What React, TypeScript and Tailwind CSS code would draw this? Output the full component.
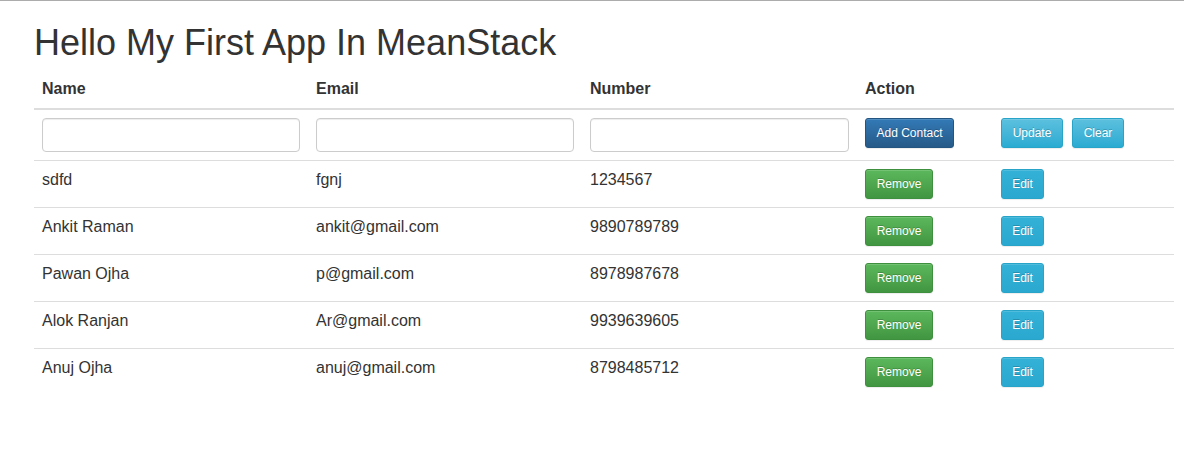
import React from "react";

const contacts = [
  { name: "sdfd", email: "fgnj", number: "1234567" },
  { name: "Ankit Raman", email: "ankit@gmail.com", number: "9890789789" },
  { name: "Pawan Ojha", email: "p@gmail.com", number: "8978987678" },
  { name: "Alok Ranjan", email: "Ar@gmail.com", number: "9939639605" },
  { name: "Anuj Ojha", email: "anuj@gmail.com", number: "8798485712" },
];

const btn =
  "inline-flex items-center justify-center h-[30px] rounded-[3px] border text-[12px] leading-[18px] text-white [text-shadow:0_-1px_0_rgba(0,0,0,0.2)] shadow-[inset_0_1px_0_rgba(255,255,255,0.15),0_1px_1px_rgba(0,0,0,0.075)]";
const primary = "bg-linear-to-b from-[#337ab7] to-[#265a88] border-[#245580]";
const success = "bg-linear-to-b from-[#5cb85c] to-[#419641] border-[#3e8f3e]";
const info = "bg-linear-to-b from-[#5bc0de] to-[#2aabd2] border-[#28a4c9]";
const infoFlat = "bg-linear-to-b from-[#34b1d6] to-[#2aa8cf] border-[#28a4c9]";

const input =
  "block w-full h-[34px] rounded-[4px] border border-[#cccccc] bg-white px-3 text-[14px] shadow-[inset_0_1px_1px_rgba(0,0,0,0.075)] outline-none";

export default function App() {
  return (
    <div
      className="min-h-[457px] bg-white border-t border-[#acacac] text-[#333333] text-[16px]"
      style={{ fontFamily: '"Liberation Sans", Arial, sans-serif' }}
    >
      <div className="ml-[34px] w-[1140px]">
        <h1 className="mt-[22px] mb-[6px] text-[36px] leading-[39.6px] font-medium">
          Hello My First App In MeanStack
        </h1>
        <table className="w-[1140px] table-fixed border-collapse">
          <colgroup>
            <col className="w-[274px]" />
            <col className="w-[274px]" />
            <col className="w-[275px]" />
            <col className="w-[136px]" />
            <col />
          </colgroup>
          <thead>
            <tr className="border-b-2 border-[#dddddd]">
              <th className="p-2 text-left font-bold leading-[23px]">Name</th>
              <th className="p-2 text-left font-bold leading-[23px]">Email</th>
              <th className="p-2 text-left font-bold leading-[23px]">Number</th>
              <th className="p-2 text-left font-bold leading-[23px]">Action</th>
              <th className="p-2" />
            </tr>
          </thead>
          <tbody>
            <tr className="border-b border-[#dddddd]">
              <td className="p-2 align-top">
                <input className={input} />
              </td>
              <td className="p-2 align-top">
                <input className={input} />
              </td>
              <td className="p-2 align-top">
                <input className={input} />
              </td>
              <td className="p-2 align-top">
                <button className={`${btn} ${primary} w-[89px]`}>Add Contact</button>
              </td>
              <td className="p-2 align-top">
                <div className="flex gap-[9px]">
                  <button className={`${btn} ${info} w-[62px]`}>Update</button>
                  <button className={`${btn} ${info} w-[52px]`}>Clear</button>
                </div>
              </td>
            </tr>
            {contacts.map((c) => (
              <tr key={c.number} className="border-b border-[#dddddd] last:border-b-0">
                <td className="p-2 pt-[9px] align-top leading-[20px]">{c.name}</td>
                <td className="p-2 pt-[9px] align-top leading-[20px]">{c.email}</td>
                <td className="p-2 pt-[9px] align-top leading-[20px]">{c.number}</td>
                <td className="p-2 align-top">
                  <button className={`${btn} ${success} w-[68px]`}>Remove</button>
                </td>
                <td className="p-2 align-top">
                  <button className={`${btn} ${infoFlat} w-[43px]`}>Edit</button>
                </td>
              </tr>
            ))}
          </tbody>
        </table>
      </div>
    </div>
  );
}
